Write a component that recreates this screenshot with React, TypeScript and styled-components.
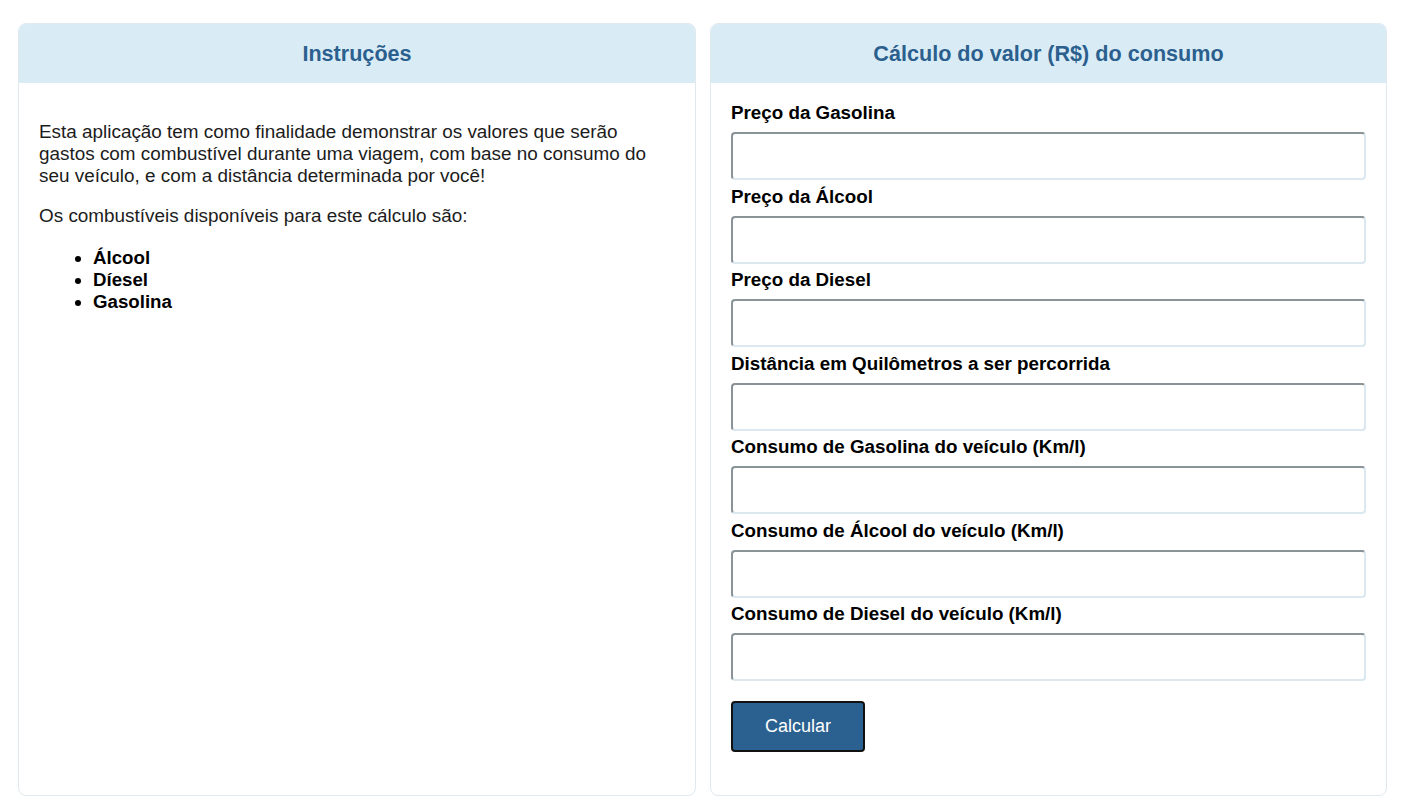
import styled, { createGlobalStyle } from "styled-components";

const GlobalStyle=createGlobalStyle`
    body{
        margin:0;
        background:#ffffff;
        font-family:"Liberation Sans", Arial, sans-serif;
        color:#000000;
    }
`

const Page=styled.div`
    display:grid;
    grid-template-columns:678px 677px;
    gap:14px;
    padding:23px 17px 15px 18px;
`

const Card=styled.section`
    border:1px solid #dfe9ee;
    border-radius:8px;
    overflow:hidden;
    display:flex;
    flex-direction:column;
    height:773px;
    box-sizing:border-box;
`

const Header=styled.h2`
    margin:0;
    height:59px;
    display:flex;
    align-items:center;
    justify-content:center;
    background:#d9ecf6;
    color:#2b5f8e;
    font-size:21.6px;
    font-weight:bold;
`

const Body=styled.div`
    padding:20px;
    font-size:18.9px;
    line-height:22px;
    color:#1c1c1c;
    > p{
        margin:18px 0;
    }
    > ul{
        margin:20px 0;
        padding-left:54px;
        font-weight:bold;
        font-size:18.7px;
        color:#000000;
    }
`

const Form=styled.form`
    padding:20px;
    display:flex;
    flex-direction:column;
`

const Label=styled.label`
    display:block;
    font-size:18.8px;
    line-height:20px;
    font-weight:bold;
    margin-bottom:9px;
`

const Input=styled.input`
    display:block;
    box-sizing:border-box;
    width:100%;
    height:48px;
    margin:0 0 6.5px 0;
    border-style:solid;
    border-width:2px;
    border-color:#8a9397 #dbe8f0 #dbe8f0 #8a9397;
    border-radius:4px;
    font-size:18px;
    padding:0 10px;
    background:#ffffff;
`

const Button=styled.button`
    margin-top:13.5px;
    width:134px;
    height:51px;
    background:#2a6190;
    color:#ffffff;
    border:2px solid #111111;
    border-radius:4px;
    font-family:"Liberation Sans", Arial, sans-serif;
    font-size:18px;
    cursor:pointer;
`

const fields=[
    'Preço da Gasolina'
    ,'Preço da Álcool'
    ,'Preço da Diesel'
    ,'Distância em Quilômetros a ser percorrida'
    ,'Consumo de Gasolina do veículo (Km/l)'
    ,'Consumo de Álcool do veículo (Km/l)'
    ,'Consumo de Diesel do veículo (Km/l)'
]

export default function App(){
    return <>
        <GlobalStyle/>
        <Page>
            <Card>
                <Header>Instruções</Header>
                <Body>
                    <p>Esta aplicação tem como finalidade demonstrar os valores que serão gastos com combustível durante uma viagem, com base no consumo do seu veículo, e com a distância determinada por você!</p>
                    <p>Os combustíveis disponíveis para este cálculo são:</p>
                    <ul>
                        <li>Álcool</li>
                        <li>Díesel</li>
                        <li>Gasolina</li>
                    </ul>
                </Body>
            </Card>
            <Card>
                <Header>Cálculo do valor (R$) do consumo</Header>
                <Form onSubmit={(e)=>e.preventDefault()}>
                    {fields.map((label,index)=>{
                        return <div key={index}>
                            <Label htmlFor={'f'+index}>{label}</Label>
                            <Input id={'f'+index} type="text"/>
                        </div>
                    })}
                    <div>
                        <Button type="submit">Calcular</Button>
                    </div>
                </Form>
            </Card>
        </Page>
    </>
}
